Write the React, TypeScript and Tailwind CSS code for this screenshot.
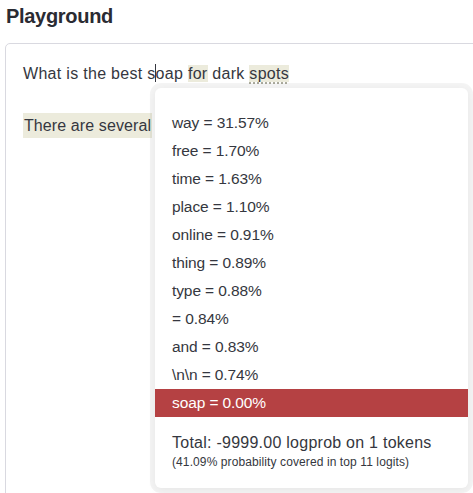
import React from "react";

const rows = [
  "way = 31.57%",
  "free = 1.70%",
  "time = 1.63%",
  "place = 1.10%",
  "online = 0.91%",
  "thing = 0.89%",
  "type = 0.88%",
  " = 0.84%",
  "and = 0.83%",
  "\\n\\n = 0.74%",
];

export default function App() {
  return (
    <div
      className="relative w-[473px] h-[493px] overflow-hidden bg-white text-[#353740]"
      style={{ fontFamily: '"Liberation Sans", Arial, sans-serif' }}
    >
      <div className="pl-[6px] pt-[3px] text-[20px] leading-[26px] font-bold text-[#2a2b32] tracking-[-0.3px]">
        Playground
      </div>
      <div className="mt-[14px] ml-[5px] w-[490px] h-[460px] border border-[#d9d9e0] rounded-[5px] pl-[17px] pt-[18px] text-[16px]">
        <div className="h-[24px] leading-[24px] whitespace-pre tracking-[0.3px]">
          <span>What is the best s</span>
          <span className="inline-block w-px h-[18px] bg-[#353740] align-[-3px] -mx-[0.5px]"></span>
          <span>oap </span>
          <span className="bg-[#ecebdc]">for</span>
          <span> dark </span>
          <span className="bg-[#ecebdc] underline decoration-dotted decoration-[#9a9a88] underline-offset-[4px]">spots</span>
        </div>
        <div className="mt-[26px] h-[27px] leading-[27px] tracking-[0.1px]">
          <span className="bg-[#ecebdc] px-[1px] py-[4px]">There are several</span>
        </div>
      </div>

      <div className="absolute left-[155px] top-[88px] w-[313px] h-[400px] bg-white rounded-[6px] shadow-[0_0_0_5px_rgba(0,0,0,0.045),0_2px_8px_rgba(0,0,0,0.06)]">
        <div className="pt-[21px]">
          {rows.map((r) => (
            <div
              key={r}
              className="h-[28px] leading-[28px] pl-[17px] text-[15.5px] tracking-[-0.1px]"
            >
              {r}
            </div>
          ))}
          <div className="h-[28px] leading-[28px] pl-[17px] text-[15.5px] tracking-[-0.1px] bg-[#b54143] text-white">
            soap = 0.00%
          </div>
          <div className="pl-[17px] pt-[16px] text-[16px] leading-[20px] tracking-[0.25px]">
            Total: -9999.00 logprob on 1 tokens
          </div>
          <div className="pl-[17px] pt-[2px] text-[12px] leading-[14px] tracking-[0.1px]">
            (41.09% probability covered in top 11 logits)
          </div>
        </div>
      </div>
    </div>
  );
}
